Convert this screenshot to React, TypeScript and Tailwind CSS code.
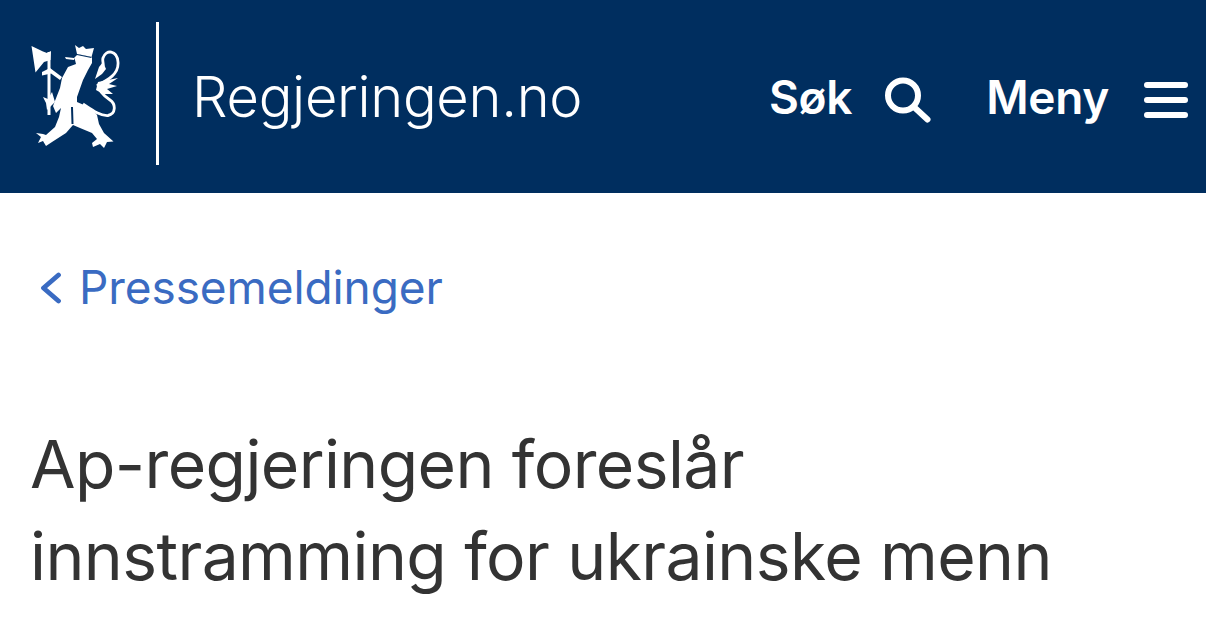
import React from "react";

function Crest() {
  return (
    <svg width="90" height="106" viewBox="30 44 90 106" className="shrink-0" fill="#fff">
      {/* axe */}
      <path d="M31.5 46 L43 51.5 L47 53 L51 51 L50.5 60 L44 62 L35.5 72.5 Z" />
      <rect x="47.5" y="52" width="3" height="63" />
      <path d="M42 72 L50 68 L62 77 L60 80 L51 73.5 L42 75.5 Z" />
      <path d="M43 97 L48 99 L52 92 L55 102 L47 110 L46 103 Z" />
      {/* crown */}
      <path d="M75 45 L79 48 L83 46 L86 49 L94 48 L91.5 57 L77 54 Z" />
      {/* lion */}
      <path d="M74 58 L78 54 L92 57 L92 63 L88 70 L83 80 L77 97 L77 102 L84 105 L92 109 L97 115 L99 124 L104 133 L113.5 141.5 L107 142 L104 148 L100 144 L93 147 L92 143 L97 139 L92 133 L80 128 L73 125 L66 133 L52 142 L46 146 L43 141 L38 143 L41 137 L36 133 L43 134 L46 135 L55 127 L59 117 L61 108 L56 113 L53 106 L60 88 L62 78 L68 67 L76 64 L75 60 Z" />
      <path d="M72 107 L72.5 124" stroke="#002e5f" strokeWidth="2" fill="none" />
      <path d="M77 54.5 L91.5 57.5" stroke="#002e5f" strokeWidth="1.2" fill="none" />
      <path d="M65 57 L74 58 L74 60 L66 59 Z" />
      {/* tail */}
      <path
        d="M83 104 C92 110 100 116 108 115.5 C116 114 116 104 110 100 C104 96 99 92 98 85 C108 80 119 74 118 62 C117 50 106 49 103 58 C102 61 104 64 103 66"
        fill="none"
        stroke="#fff"
        strokeWidth="2.8"
      />
      <path d="M103 62 L106 69 L102 74 L95 79 L99 67 Z" />
      <path d="M96 90 L98 82 L118 78 L109 84 L117 86 L107 89 L113 94 L103 94 Z" />
    </svg>
  );
}

export default function App() {
  return (
    <div className="h-[631px] overflow-hidden bg-white font-['Inter','Liberation_Sans',sans-serif]">
      <header className="flex h-[193px] items-center bg-[#002e5f] pl-[30px] pr-[18px] text-white">
        <Crest />
        <div className="-mt-[6px] ml-[36px] h-[143px] w-[3px] bg-white" />
        <div className="ml-[33px] text-[56px] font-light leading-none tracking-[-0.3px]">Regjeringen.no</div>
        <div className="ml-auto flex items-center text-[46px] font-semibold leading-none">
          <span className="tracking-[-0.3px]">Søk</span>
          <svg width="46" height="46" viewBox="0 0 46 46" fill="none" stroke="#fff" strokeWidth="6" strokeLinecap="round" className="ml-[33px] mt-[7px]">
            <circle cx="18" cy="18.5" r="15" />
            <path d="M29 30 L42.5 42.5" />
          </svg>
          <span className="ml-[55px] tracking-[-0.3px]">Meny</span>
          <div className="ml-[35px] mt-[6px] flex w-[44px] flex-col gap-[9px]">
            <div className="h-[6px] rounded-full bg-white" />
            <div className="h-[6px] rounded-full bg-white" />
            <div className="h-[6px] rounded-full bg-white" />
          </div>
        </div>
      </header>
      <main className="px-[30px]">
        <a className="mt-[65px] flex items-center text-[46px] leading-[58px] tracking-[-0.1px] text-[#3a6bc2]">
          <svg width="22" height="32" viewBox="0 0 22 32" fill="none" stroke="#3a6bc2" strokeWidth="4.8" strokeLinecap="round" strokeLinejoin="round" className="ml-[10px] mt-[2px]">
            <path d="M18.5 3 L3.5 16 L18.5 29" />
          </svg>
          <span className="ml-[17px]">Pressemeldinger</span>
        </a>
        <h1 className="mt-[102px] text-[66px] font-normal leading-[92px] tracking-[-0.6px] text-[#333333]">
          Ap-regjeringen foreslår
          <br />
          innstramming for ukrainske menn
        </h1>
      </main>
    </div>
  );
}
